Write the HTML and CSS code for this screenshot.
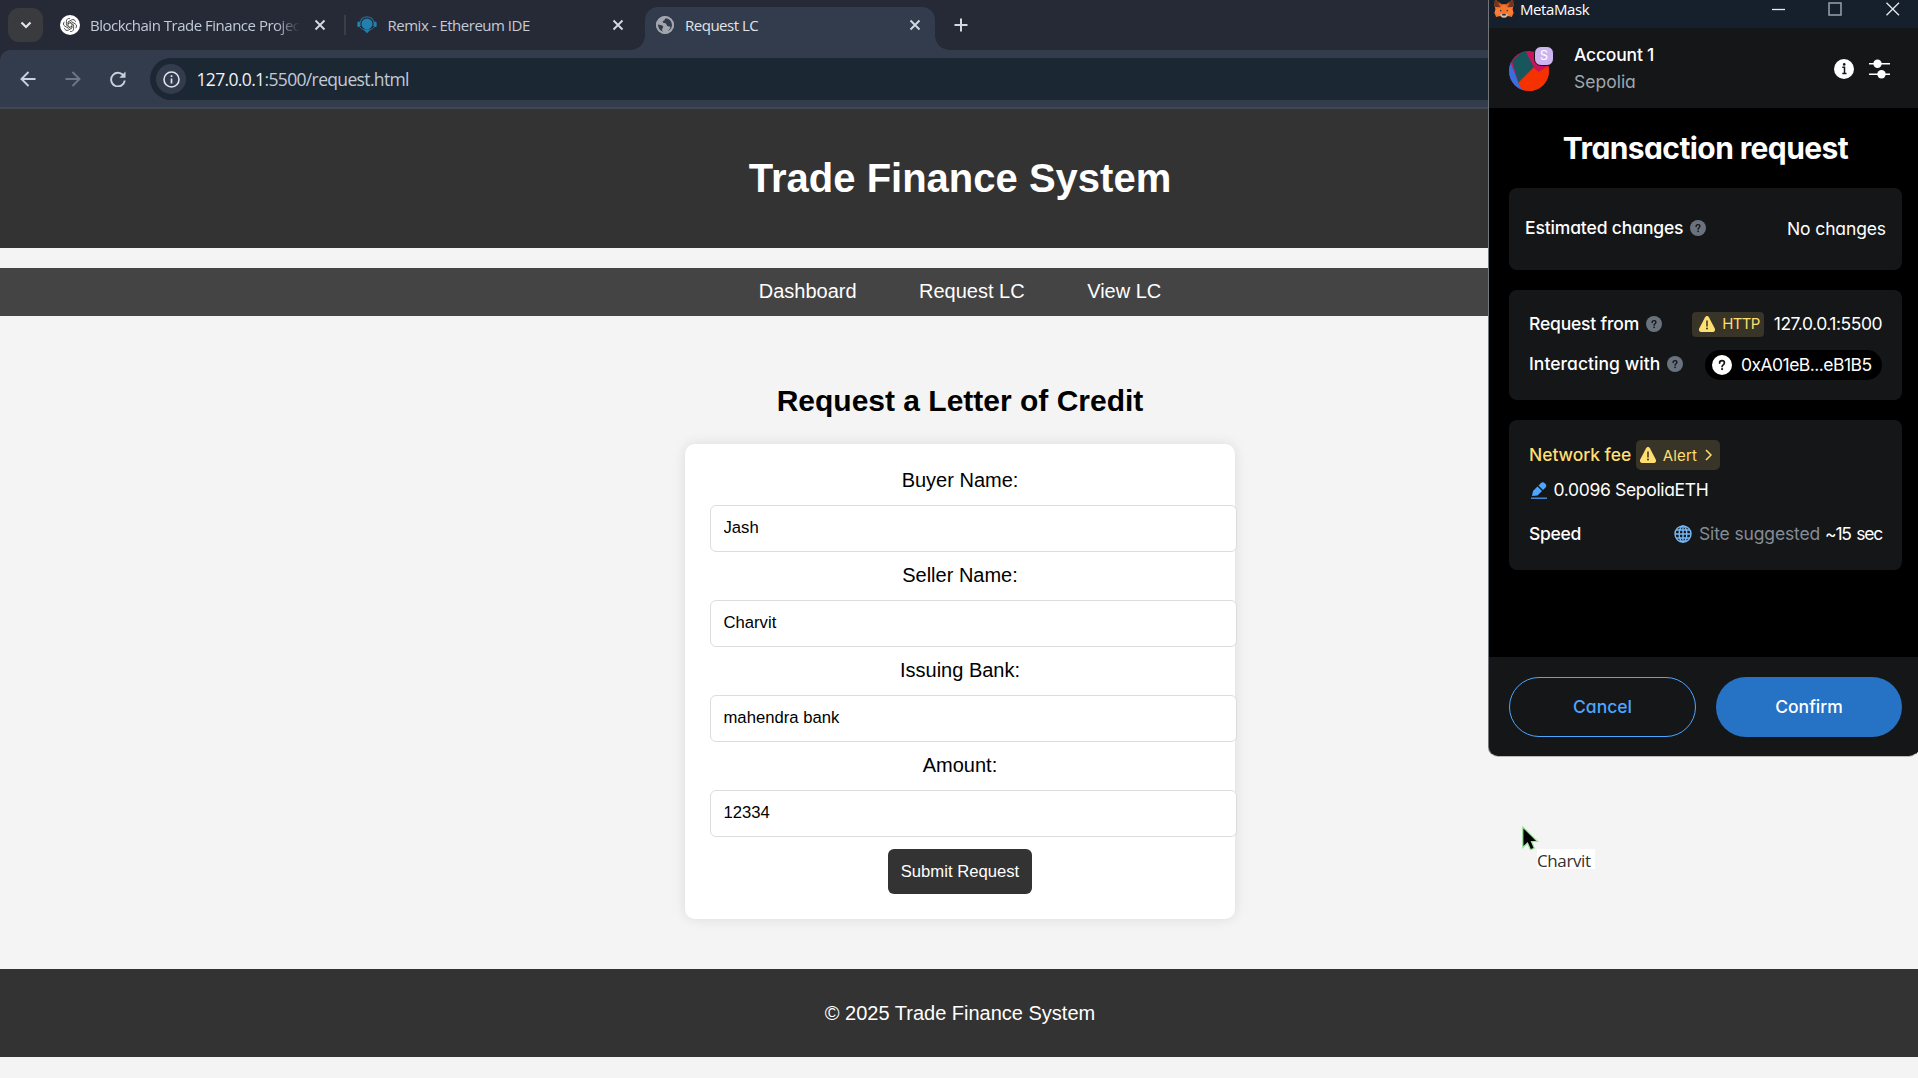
FILE: index.html
```
<!DOCTYPE html>
<html lang="en">
<head>
<meta charset="utf-8">
<title>Request LC</title>
<link rel="stylesheet" href="styles.css">
</head>
<body>
<svg width="0" height="0" class="defs" aria-hidden="true">
  <symbol id="close" viewBox="0 0 12 12"><path d="M1.5 1.5l9 9M10.5 1.5l-9 9" fill="none" stroke="currentColor" stroke-width="1.9"/></symbol>
  <symbol id="warn" viewBox="0 0 18 18"><path d="M9 1c.8 0 1.4.4 1.9 1.3l5.9 11.200c.8 1.700-.2 3.500-2 3.500H3.200c-1.800 0-2.800-1.800-2-3.500L7.100 2.300C7.600 1.400 8.200 1 9 1z" fill="#ffdf70"/><path d="M9 6v5" stroke="#3a3427" stroke-width="1.500" stroke-linecap="round"/><circle cx="9" cy="13.500" r="1" fill="#3a3427"/></symbol>
  <symbol id="tip" viewBox="0 0 20 20"><circle cx="10" cy="10" r="10" fill="currentColor"/><path d="M7.600 8.100C7.600 6.600 8.600 5.700 10 5.700s2.400.9 2.400 2.200c0 1.900-2.300 1.900-2.300 3.700" fill="none" stroke="#141618" stroke-width="1.700" stroke-linecap="round"/><circle cx="10.100" cy="14.100" r="1.100" fill="#141618"/></symbol>
</svg>

<div class="browser">
  <div class="tabstrip">
    <button class="tab-search"><svg width="12" height="8" viewBox="0 0 12 8"><path d="M1.500 1.500L6 6l4.500-4.500" fill="none" stroke="#e3e5e9" stroke-width="2.200"/></svg></button>
    <div class="tab tab-first">
      <svg class="fav" width="20" height="20" viewBox="0 0 20 20"><circle cx="10" cy="10" r="10" fill="#fff"/><g fill="none" stroke="#333" stroke-width=".8"><g id="petal"><path d="M10 3.600c-1.700-.6-3.600.5-3.600 2.500v4.100l3.600 2.100"/></g><use href="#petal" transform="rotate(60 10 10)"/><use href="#petal" transform="rotate(120 10 10)"/><use href="#petal" transform="rotate(180 10 10)"/><use href="#petal" transform="rotate(240 10 10)"/><use href="#petal" transform="rotate(300 10 10)"/></g></svg>
      <span class="tab-title faded">Blockchain Trade Finance Projec</span>
      <svg class="x" width="12" height="12"><use href="#close"/></svg>
    </div>
    <div class="tab tab-second">
      <svg class="fav" width="20" height="18" viewBox="0 0 20 18"><path d="M3.200 6.500C3.800 3 6.600.9 10 .9S16.200 3 16.800 6.500" fill="none" stroke="#1f6d98" stroke-width="1.200"/><circle cx="10" cy="7.900" r="5.500" fill="#2380ae"/><rect x="0.300" y="5.500" width="3.200" height="5.600" rx="1.500" fill="#2380ae"/><rect x="16.500" y="5.500" width="3.200" height="5.600" rx="1.500" fill="#2380ae"/><path d="M3 11c1.500 2.500 4 3.200 7 3.200s5.500-.7 7-3.200" fill="none" stroke="#1f6d98"/><path d="M6.500 13.500h7L10 17.300z" fill="#2380ae"/></svg>
      <span class="tab-title remix">Remix - Ethereum IDE</span>
      <svg class="x" width="12" height="12"><use href="#close"/></svg>
    </div>
    <div class="tab tab-active">
      <svg class="fav" width="18" height="18" viewBox="0 0 18 18"><circle cx="9" cy="9" r="9" fill="#a3a7ad"/><path d="M10.500 2.100c-1.800.3-1.400 2.300-3 2.700-1.500.5-.6 2.100.5 2.200 1.800.1 2.400.8 2.800 2.300.6 1.700 3 .9 3.500 1.600.4.8-1 3-2.700 4 4.300-1.300 5-4.500 4.700-7.200-.6-2.700-2.700-5.200-5.800-5.600zM1.900 8.300c1.400 1.100 4.500.3 5.200 2.200.3 1.600-1.200 1.700-1.100 3.200.1 1 1 1.300 1 2.400C3.500 15.200 1.600 12 1.900 8.300z" fill="#323c4d"/><circle cx="9" cy="9" r="8" fill="none" stroke="#a3a7ad" stroke-width="2"/></svg>
      <span class="tab-title">Request LC</span>
      <svg class="x" width="12" height="12"><use href="#close"/></svg>
    </div>
    <svg class="plus" width="14" height="14" viewBox="0 0 14 14"><path d="M7 .5v13M.5 7h13" stroke="#d5d8de" stroke-width="2"/></svg>
  </div>
  <div class="toolbar">
    <svg class="nav-icon" width="16" height="16" viewBox="0 0 16 16"><path d="M15.500 8H2M8.500 1L1.500 8l7 7" fill="none" stroke="#c9d1de" stroke-width="1.900"/></svg>
    <svg class="nav-icon forward" width="16" height="16" viewBox="0 0 16 16"><path d="M.5 8H14M7.500 1l7 7-7 7" fill="none" stroke="#6e7786" stroke-width="1.900"/></svg>
    <svg class="nav-icon" width="16" height="16" viewBox="0 0 16 16"><path d="M14 5.500A6.800 6.800 0 1 0 14.700 9.500" fill="none" stroke="#c9d1de" stroke-width="1.900"/><path d="M15.500.5v6.200H9.300z" fill="#c9d1de"/></svg>
    <div class="omnibox">
      <span class="site-info"><svg width="17" height="17" viewBox="0 0 17 17"><circle cx="8.500" cy="8.500" r="7.500" fill="none" stroke="#dfe3ea" stroke-width="1.600"/><path d="M8.500 7.500v5M8.500 4.300v1.800" stroke="#dfe3ea" stroke-width="1.700"/></svg></span>
      <span class="url"><b>127.0.0.1</b>:5500/request.html</span>
    </div>
  </div>
</div>

<div class="page">
<header class="site-header"><h1>Trade Finance System</h1></header>
<nav class="site-nav"><a>Dashboard</a><a>Request LC</a><a>View LC</a></nav>
<main class="content">
  <h2>Request a Letter of Credit</h2>
  <form class="lc-form">
    <label>Buyer Name:</label><input type="text" value="Jash">
    <label>Seller Name:</label><input type="text" value="Charvit">
    <label>Issuing Bank:</label><input type="text" value="mahendra bank">
    <label>Amount:</label><input type="text" value="12334">
    <button type="button">Submit Request</button>
  </form>
</main>
<footer class="site-footer">© 2025 Trade Finance System</footer>
</div>

<aside class="wallet">
  <div class="titlebar">
    <svg class="fox" width="20" height="20" viewBox="0 0 20 20"><path d="M1 .5l7 4.700h4L19 .5l.5 6-1 4 1 3.500-1.600 4-4-1-2.200 1.600H8.300L6.100 17l-4 1L.5 14l1-3.500-1-4z" fill="#f5762a"/><path d="M1 .5l7 4.700-1.500 3L1.300 8 .5 6zM19 .5l-7 4.700 1.500 3L18.700 8l.8-2z" fill="#78331a"/><path d="M4 3.800l4 1.600-1.600 2.800zM16 3.800l-4 1.600 1.600 2.800z" fill="#e8601c"/><path d="M1.500 10.500L6 9l1.500 4.500L6.100 17 .5 14zM18.500 10.500L14 9l-1.500 4.500 1.400 3.500 5.600-3z" fill="#fb7d35"/><path d="M6 10.500l2 1.500-2 .6zM14 10.500l-2 1.500 2 .6z" fill="#1f3a4a"/><path d="M6 15.500l2.500-1h3l2.500 1-2.300 3H8.300z" fill="#cfc2b6"/><path d="M8.500 14.800h3l.4 1.700H8.100z" fill="#20262c"/></svg>
    <span class="app-name">MetaMask</span>
    <svg class="win-btns" width="128" height="14" viewBox="0 0 128 14"><path d="M0 7.500h13" stroke="#e8eaed" stroke-width="1.300"/><rect x="57" y="1" width="12" height="12" fill="none" stroke="#9ba1a9" stroke-width="1.500"/><path d="M114.500.8l12.500 12.500M127 .8L114.500 13.300" stroke="#e8eaed" stroke-width="1.300"/></svg>
  </div>
  <div class="account-bar">
    <div class="avatar">
      <svg width="40" height="40" viewBox="0 0 40 40"><clipPath id="round"><circle cx="20" cy="20" r="20"/></clipPath><g clip-path="url(#round)"><path d="M0 0h40v40H0z" fill="#c8145c"/><path d="M0 7.500L9.500 32 16 42H0z" fill="#3670e0"/><path d="M3 10l12.500-12 9.500 18.500L9.500 32z" fill="#17575c"/><path d="M9.500 31.500L24.500 16.500l5 4.500L41 14v28H14z" fill="#f53100"/></g></svg>
      <span class="net-badge">S</span>
    </div>
    <div class="account"><span class="acct-name">Account 1</span><span class="acct-net">Sepolia</span></div>
    <div class="bar-icons">
      <svg width="20" height="20" viewBox="0 0 20 20"><circle cx="10" cy="10" r="10" fill="#fff"/><path d="M8.300 8.300H10.500V14.500M8.300 14.500h4.200" fill="none" stroke="#141618" stroke-width="1.500"/><circle cx="10.200" cy="5.400" r="1.300" fill="#141618"/></svg>
      <svg width="21" height="20" viewBox="0 0 21 20"><path d="M0 4.700h21M0 15.300h21" stroke="#fff" stroke-width="1.500"/><circle cx="8.500" cy="4.700" r="4.200" fill="#fff"/><circle cx="12.500" cy="15.300" r="4.200" fill="#fff"/></svg>
    </div>
  </div>
  <div class="wallet-body">
    <h3>Transaction request</h3>
    <section class="card card-changes">
      <span class="label est">Estimated changes</span><svg class="tip" width="16" height="16"><use href="#tip"/></svg>
      <span class="value push nochg">No changes</span>
    </section>
    <section class="card card-request">
      <div class="row row-from"><span class="label reqf">Request from</span><svg class="tip" width="16" height="16"><use href="#tip"/></svg>
        <span class="http push"><svg width="18" height="18"><use href="#warn"/></svg><span>HTTP</span></span><span class="value host">127.0.0.1:5500</span></div>
      <div class="row row-with"><span class="label with">Interacting with</span><svg class="tip" width="16" height="16"><use href="#tip"/></svg>
        <span class="address push"><svg width="20" height="20"><use href="#tip"/></svg><span>0xA01eB...eB1B5</span></span></div>
    </section>
    <section class="card card-fee">
      <div class="row row-fee"><span class="label fee">Network fee</span>
        <span class="alert"><svg width="18" height="18"><use href="#warn"/></svg><span>Alert</span><svg class="chev" width="7" height="12" viewBox="0 0 7 12"><path d="M1 1l5 5-5 5" fill="none" stroke="#ffdf70" stroke-width="1.500"/></svg></span></div>
      <div class="row row-amount"><svg width="16" height="17" viewBox="0 0 16 17"><path d="M0 16.200h16" stroke="#4da6ff" stroke-width="1.200"/><path d="M1 14l1-5 4.500-4.500 4.500 4.500L6.500 13.500z" fill="#4da6ff"/><path d="M7.500 3.500L10 1c1-1 2.500-1 3.500 0l1 1c1 1 1 2.500 0 3.500L12 8z" fill="#4da6ff"/></svg><span class="value eth">0.0096 SepoliaETH</span></div>
      <div class="row row-speed"><span class="label spd">Speed</span>
        <svg class="push" width="18" height="18" viewBox="0 0 18 18"><g fill="none" stroke="#75b8f5" stroke-width="1.400"><circle cx="9" cy="9" r="8"/><ellipse cx="9" cy="9" rx="3.800" ry="8"/><path d="M9 1v16M1 9h16M2.200 5h13.600M2.200 13h13.600"/></g></svg>
        <span class="value muted">Site suggested</span><span class="value secs">~15 sec</span></div>
    </section>
  </div>
  <div class="actions"><button class="cancel">Cancel</button><button class="confirm">Confirm</button></div>
</aside>

<svg class="cursor" width="17" height="25" viewBox="0 0 17 25"><path d="M.8 1v20.500l4.700-4.500L8.500 23.800l3.800-1.600L9.500 15.500h6z" fill="#000" stroke="#9be59b" stroke-width="1.200"/></svg>
<div class="drag-label">Charvit</div>
</body>
</html>
```
FILE: styles.css
```
* { box-sizing: border-box; }
body {
  margin: 0; width: 1918px; height: 1078px; overflow: hidden; position: relative;
  background: #f4f4f4; color: #000;
  font-family: "Liberation Sans", Arial, sans-serif; font-size: 20px; line-height: 23px;
}
svg { display: block; flex: none; }
.defs { position: absolute; }
button, input { font: inherit; }

/* browser frame */
.browser { height: 109px; background: #252a36; font-family: "Open Sans", sans-serif; }
.tabstrip { height: 50px; display: flex; align-items: flex-start; padding: 7px 0 0 8px; }
.tab-search { width: 35px; height: 34px; margin-top: 1px; padding: 0; border: 0; border-radius: 11px; background: #393b3f; display: grid; place-items: center; }
.tab { height: 36px; display: flex; align-items: center; font-size: 15px; letter-spacing: -.49px; color: #c3cad8; white-space: nowrap; }
.tab-first { width: 302px; padding: 0 0 0 17px; }
.tab-first::after { content: ""; width: 2px; height: 20px; margin-left: 18px; background: #3b3e44; flex: none; }
.tab-second { width: 300px; padding-left: 12px; }
.tab-active { width: 290px; height: 43px; padding: 0 0 7px 11px; border-radius: 13px 13px 0 0; background: #323c4d; color: #e0e3e8; position: relative; }
.tab-active::before, .tab-active::after { content: ""; position: absolute; bottom: 0; width: 14px; height: 14px; }
.tab-active::before { left: -14px; background: radial-gradient(circle at 0 0, transparent 13.500px, #323c4d 14px); }
.tab-active::after { right: -14px; background: radial-gradient(circle at 100% 0, transparent 13.500px, #323c4d 14px); }
.tab-title { margin-left: 11px; flex: 1; }
.tab-active .x { margin-right: 14px; }
.tab-second .x { margin-right: 21px; }
.tab-first .x { margin-left: 14px; }
.x { color: #d3d9e3; }
.tab-title.faded { margin-left: 10px; flex: 0 0 210px; -webkit-mask-image: linear-gradient(90deg, #000 186px, transparent 210px); mask-image: linear-gradient(90deg, #000 186px, transparent 210px); }
.tab-title.remix { margin-left: 10.500px; }
.plus { margin: 11px 0 0 19px; }
.toolbar { height: 59px; display: flex; align-items: flex-start; padding: 8px 0 0 19.500px; background: #323c4d; border-bottom: 2px solid #42484f; border-top-left-radius: 10px; }
.nav-icon { margin: 12.500px 29px 0 0; }
.omnibox { flex: 1; height: 42px; margin-left: -4.500px; padding-left: 6px; border-radius: 21px 0 0 21px; background: #1c2734; display: flex; align-items: center; }
.site-info { width: 30px; height: 30px; border-radius: 50%; background: #323c4d; display: grid; place-items: center; }
.url { margin-left: 10.500px; font-size: 17.500px; letter-spacing: -.65px; color: #c3cad4; }
.url b { font-weight: 400; color: #f0f2f5; }

/* page */
.page { width: 1920px; }
.site-header { height: 139px; padding-bottom: 2px; background: #333; color: #fff; display: grid; place-items: center; }
h1 { margin: 0; font-size: 40px; line-height: 46px; }
.site-nav { height: 48px; margin-top: 20px; padding-top: 12px; background: #444; color: #fff; display: flex; justify-content: center; gap: 62.500px; }
.content { height: 653px; padding-top: 68px; display: flex; flex-direction: column; align-items: center; }
h2 { margin: 0 0 26px; font-size: 30px; line-height: 34px; }
.lc-form { width: 550px; height: 475px; padding: 25px; border-radius: 10px; background: #fff; box-shadow: 0 0 12.500px rgba(0,0,0,.1); display: flex; flex-direction: column; align-items: center; }
.lc-form label { height: 23px; line-height: 23px; }
.lc-form input { width: 526.500px; height: 47px; flex: none; align-self: flex-start; margin: 12.500px 0; padding: 0 12.500px; border: 1px solid #ddd; border-radius: 6px; background: #fff; color: #000; font-size: 16.670px; }
.lc-form button { width: 144px; height: 45px; padding: 0; border: 0; border-radius: 6px; background: #333; color: #fff; font-size: 16.670px; }
.site-footer { height: 88px; background: #333; color: #fff; display: grid; place-items: center; }

/* wallet window */
.wallet { position: absolute; left: 1488px; top: -1px; width: 431px; height: 758px; border: 1px solid #555b62; border-color: transparent #0000 #bbb #71767a; border-radius: 0 0 10px 10px; overflow: hidden; color: #fff; font-family: Inter, sans-serif; font-size: 17.500px; line-height: 24px; font-feature-settings: "cv11"; display: flex; flex-direction: column; white-space: nowrap; background: #141618; }
.titlebar { height: 28px; flex: none; padding-left: 5px; background: #16202d; display: flex; align-items: flex-start; }
.fox { margin-top: -1px; }
.app-name { margin: -3px 0 0 6px; font: 15px/24px "Open Sans", sans-serif; letter-spacing: -.4px; }
.win-btns { margin: 2px 18px 0 auto; }
.account-bar { height: 80px; flex: none; padding: 0 28px 0 20px; display: flex; }
.avatar { position: relative; margin-top: 23px; width: 40px; height: 40px; }
.net-badge { position: absolute; left: 25px; top: -5px; width: 20px; height: 20px; border: 1px solid #141618; border-radius: 7px; background: #cfb5f0; font-size: 12.500px; line-height: 18px; text-align: center; }
.account { margin: 15px 0 0 25px; display: flex; flex-direction: column; gap: 3px; }
.acct-name { font-weight: 500; letter-spacing: -.2px; }
.acct-net { color: #9fa6ae; }
.bar-icons { margin: 30.500px 0 0 auto; display: flex; gap: 15px; }
.wallet-body { height: 549px; flex: none; padding: 0 16px 0 20px; background: #000; }
h3 { margin: 22px 0; height: 36px; line-height: 36px; font-size: 30px; font-weight: 700; letter-spacing: -.6px; text-align: center; }
.card { margin-bottom: 20px; border-radius: 8px; background: #141618; }
.card-changes { height: 82px; padding: 0 16px; display: flex; align-items: center; }
.label { font-weight: 500; }
.tip { margin-left: 7px; color: #6a737d; }
.push { margin-left: auto; }
.card-changes .label, .card-changes .tip { margin-bottom: 2px; }
.est { letter-spacing: -.14px; }
.nochg { letter-spacing: -.12px; }
.reqf { letter-spacing: -.18px; }
.with { letter-spacing: .05px; }
.card-request { height: 110px; padding: 19px 20px 0; }
.row { display: flex; align-items: center; }
.row-from { height: 30px; }
.row-with { height: 30px; margin-top: 11px; }
.row-with .label, .row-with .tip { margin-bottom: 2px; }
.http { width: 72px; height: 25px; padding-left: 6px; border-radius: 4px; background: #393428; color: #ffdf70; font-size: 15px; letter-spacing: -.7px; display: flex; align-items: center; gap: 6px; }
.host { margin-left: 9.500px; letter-spacing: -.48px; }
.address { width: 177px; height: 30px; padding-left: 7px; border-radius: 15px; background: #000; letter-spacing: -.53px; display: flex; align-items: center; gap: 9px; }
.card-fee { height: 150px; margin: 0; padding: 20px 20px 0; }
.fee { color: #ffdf70; letter-spacing: -.06px; }
.alert { width: 84px; height: 30px; margin-left: 4.500px; padding-left: 3px; border-radius: 5px; background: #393428; color: #ffdf70; font-size: 15px; letter-spacing: .2px; display: flex; align-items: center; }
.alert span { margin: 1px 8px 0 6px; }
.row-amount { height: 24px; margin-top: 8px; padding-left: 1.500px; }
.eth { margin-left: 7px; letter-spacing: -.33px; }
.row-speed { height: 24px; margin-top: 20px; }
.spd { letter-spacing: -.3px; }
.muted { margin-left: 7px; color: #848c96; letter-spacing: -.15px; }
.secs { margin-left: 5px; letter-spacing: -1.250px; word-spacing: 2px; }
.actions { height: 99px; flex: none; padding: 20px 16px 0 20px; display: flex; gap: 20px; }
.actions button { height: 60px; flex: 1; border: 0; border-radius: 30px; color: #fff; font-weight: 500; font-feature-settings: "cv11"; }
.actions .cancel { flex: 0 0 187px; background: none; border: 1px solid #4da6ff; color: #4da6ff; }
.actions .confirm { background: #2673c6; }

.cursor { position: absolute; left: 1521.500px; top: 826px; }
.drag-label { position: absolute; left: 1537px; top: 849px; width: 58px; height: 20px; background: #fff; color: #333; font: 400 17px/23px "Open Sans", sans-serif; letter-spacing: -.4px; }
```
